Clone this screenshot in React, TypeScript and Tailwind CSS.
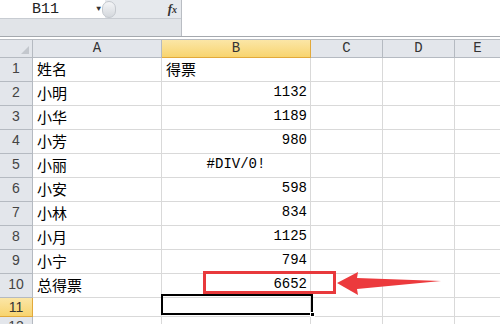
import React from 'react';

type Row = { n: number; a: string; b: string; align?: 'right' | 'center' };

const ROWS: Row[] = [
  { n: 1, a: '姓名', b: '得票' },
  { n: 2, a: '小明', b: '1132', align: 'right' },
  { n: 3, a: '小华', b: '1189', align: 'right' },
  { n: 4, a: '小芳', b: '980', align: 'right' },
  { n: 5, a: '小丽', b: '#DIV/0!', align: 'center' },
  { n: 6, a: '小安', b: '598', align: 'right' },
  { n: 7, a: '小林', b: '834', align: 'right' },
  { n: 8, a: '小月', b: '1125', align: 'right' },
  { n: 9, a: '小宁', b: '794', align: 'right' },
  { n: 10, a: '总得票', b: '6652', align: 'right' },
];

const cjk = "font-['Noto_Sans_CJK_SC','Noto_Sans',sans-serif]";
const mono = "font-['Liberation_Mono',monospace]";
const rowHead = "font-['Liberation_Sans',sans-serif]";

// ── Formula bar ────────────────────────────────────────────────────────────────

const FormulaBar: React.FC = () => (
  <div className="flex h-[36px] bg-white">
    <div className="flex w-[182px] flex-col border-r border-[#b9bdc3]">
      <div className="flex h-[18px] items-center bg-[#e6e9ed]">
        <div className={`flex h-full w-[105px] items-center bg-white pl-[32px] text-[15px] leading-none text-[#222] ${mono}`}>
          B11
          <span className="ml-auto mr-[4px] text-[8px] text-[#333]">▼</span>
        </div>
        <div className="-ml-[3px] h-[17px] w-[14px] rounded-full border border-[#c4c8ce] bg-gradient-to-b from-[#f4f5f7] to-[#d4d8dd]" />
        <span className="ml-auto mr-[4px] font-['Liberation_Serif',serif] text-[13px] font-bold italic text-[#333]">
          f<span className="text-[10px]">x</span>
        </span>
      </div>
      <div className="h-[18px] border-t border-[#c8ccd2] bg-[#e1e4e8]" />
    </div>
    <div className="flex-1 bg-white" />
  </div>
);

// ── Sheet ──────────────────────────────────────────────────────────────────────

const COLS = ['A', 'B', 'C', 'D', 'E'];

const Sheet: React.FC = () => (
  <div className="relative border-t border-[#a5a9ae]">
    <div className="h-[3px] border-b border-[#b8bcc2] bg-white" />
    <div className="grid grid-cols-[33px_129px_149px_72px_72px_1fr] grid-rows-[18px_repeat(10,24px)_19px_20px]">
      {/* header */}
      <div className="relative border-r border-b border-[#b5bac1] bg-[#e3e6eb]">
        <div className="absolute right-[3px] bottom-[3px] h-0 w-0 border-b-[8px] border-l-[8px] border-b-[#c3c7cd] border-l-transparent" />
      </div>
      {COLS.map((c) => (
        <div
          key={c}
          className={`flex items-center justify-center border-b text-[14px] text-[#333] ${mono} ${
            c === 'E' ? '' : 'border-r'
          } ${
            c === 'B'
              ? 'border-[#e2a93b] bg-gradient-to-b from-[#fbe6a6] to-[#f8d46e]'
              : 'border-[#b5bac1] bg-[#e3e6eb]'
          }`}
        >
          {c}
        </div>
      ))}

      {/* data rows */}
      {ROWS.map((r) => (
        <React.Fragment key={r.n}>
          <div className={`flex items-end justify-center border-r border-b border-[#b5bac1] bg-[#e3e6eb] pb-[2px] text-[14px] text-[#444] ${rowHead}`}>
            {r.n}
          </div>
          <div className={`flex items-end border-r border-b border-[#d9d9d9] pb-[1px] pl-[4px] text-[15px] text-black ${cjk}`}>
            {r.a}
          </div>
          <div
            className={`flex items-end border-r border-b border-[#d9d9d9] text-black ${
              r.align === 'right'
                ? `justify-end pr-[3px] pb-[2px] text-[14px] ${mono}`
                : r.align === 'center'
                  ? `justify-center pb-[2px] text-[14px] ${mono}`
                  : `pl-[4px] pb-[1px] text-[15px] ${cjk}`
            }`}
          >
            {r.b}
          </div>
          <div className="border-r border-b border-[#d9d9d9]" />
          <div className="border-r border-b border-[#d9d9d9]" />
          <div className="border-b border-[#d9d9d9]" />
        </React.Fragment>
      ))}

      {/* row 11 */}
      <div className={`flex items-center justify-center border-r border-b border-[#e2a93b] bg-gradient-to-b from-[#fbe6a6] to-[#f8d46e] text-[14px] text-[#333] ${rowHead}`}>
        11
      </div>
      <div className="border-r border-b border-[#d9d9d9]" />
      <div className="border-r border-b border-[#d9d9d9]" />
      <div className="border-r border-b border-[#d9d9d9]" />
      <div className="border-r border-b border-[#d9d9d9]" />
      <div className="border-b border-[#d9d9d9]" />

      {/* row 12 */}
      <div className={`flex items-start justify-center overflow-hidden border-r border-[#b5bac1] bg-[#e3e6eb] text-[14px] leading-[18px] text-[#444] ${rowHead}`}>
        12
      </div>
      <div className="border-r border-[#d9d9d9]" />
      <div className="border-r border-[#d9d9d9]" />
      <div className="border-r border-[#d9d9d9]" />
      <div className="border-r border-[#d9d9d9]" />
      <div />
    </div>

    {/* selection on B11 */}
    <div className="absolute top-[257px] left-[161px] h-[21px] w-[152px] border-[2px] border-black">
      <div className="absolute -right-[4px] -bottom-[4px] h-[5px] w-[5px] border border-white bg-black" />
    </div>

    {/* red highlight box */}
    <div className="absolute top-[234px] left-[203px] h-[23px] w-[133px] border-[3px] border-[#e8393c]" />

    {/* arrow */}
    <svg className="absolute top-[233px] left-[335px]" width="110" height="28" viewBox="0 0 110 28">
      <polygon points="2,13 23,2 22,8 106,11 22,19 23,25" fill="#ec3a3d" />
    </svg>
  </div>
);

export default function App() {
  return (
    <div className="h-[324px] w-[500px] overflow-hidden bg-white">
      <FormulaBar />
      <Sheet />
    </div>
  );
}
